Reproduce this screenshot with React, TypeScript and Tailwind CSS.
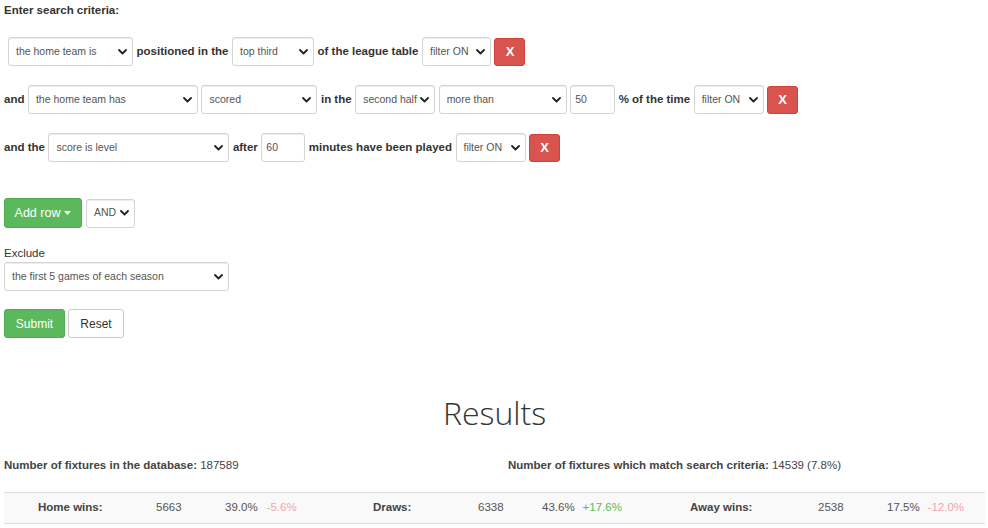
import React from "react";

const Chevron = () => (
  <svg width="9" height="6" viewBox="0 0 9 6" className="shrink-0">
    <path d="M1 1 L4.5 4.5 L8 1" fill="none" stroke="#222" strokeWidth="1.8" strokeLinecap="round" strokeLinejoin="round" />
  </svg>
);

function Sel({ w, text, h = "h-[29px]" }: { w: string; text: string; h?: string }) {
  return (
    <div
      className={`${w} ${h} shrink-0 flex items-center justify-between pl-[7px] pr-[5px] bg-white border border-[#d4d4d4] rounded-[3px] shadow-[inset_0_1px_1px_rgba(0,0,0,0.075)] text-[10.5px] text-[#555]`}
    >
      <span className="whitespace-nowrap">{text}</span>
      <Chevron />
    </div>
  );
}

function Inp({ w, text }: { w: string; text: string }) {
  return (
    <div
      className={`${w} h-[29px] shrink-0 flex items-center pl-[4px] bg-white border border-[#d4d4d4] rounded-[3px] shadow-[inset_0_1px_1px_rgba(0,0,0,0.075)] text-[10.5px] text-[#555]`}
    >
      {text}
    </div>
  );
}

const XBtn = () => (
  <div className="w-[31px] h-[28px] shrink-0 flex items-center justify-center bg-[#d9534f] border border-[#d43f3a] rounded-[3px] text-white font-bold text-[13px]">
    X
  </div>
);

const L = ({ children }: { children: React.ReactNode }) => (
  <span className="font-bold text-[11.5px] text-[#333] whitespace-nowrap">{children}</span>
);

export default function App() {
  return (
    <div className="w-[988px] h-[528px] overflow-hidden bg-white pl-[4px] pr-[3px] text-[#333]" style={{ fontFamily: '"Liberation Sans", Arial, sans-serif' }}>
      <div className="h-[20px] leading-[20px] font-bold text-[11.5px]">Enter search criteria:</div>

      <div className="mt-[17px] h-[29px] flex items-center gap-[3.5px] pl-[4px]">
        <Sel w="w-[125px]" text="the home team is" />
        <L>positioned in the</L>
        <Sel w="w-[82px]" text="top third" />
        <L>of the league table</L>
        <Sel w="w-[69px]" text="filter ON" />
        <XBtn />
      </div>

      <div className="mt-[19px] h-[29px] flex items-center gap-[3.5px]">
        <L>and</L>
        <Sel w="w-[170px]" text="the home team has" />
        <Sel w="w-[116px]" text="scored" />
        <L>in the</L>
        <Sel w="w-[80px]" text="second half" />
        <Sel w="w-[128px]" text="more than" />
        <Inp w="w-[45px]" text="50" />
        <L>% of the time</L>
        <Sel w="w-[70px]" text="filter ON" />
        <XBtn />
      </div>

      <div className="mt-[19px] h-[29px] flex items-center gap-[3.5px]">
        <L>and the</L>
        <Sel w="w-[181px]" text="score is level" />
        <L>after</L>
        <Inp w="w-[44px]" text="60" />
        <L>minutes have been played</L>
        <Sel w="w-[70px]" text="filter ON" />
        <XBtn />
      </div>

      <div className="mt-[36px] h-[30px] flex items-center gap-[4px]">
        <div className="w-[78px] h-[30px] flex items-center justify-center gap-[4px] bg-[#5cb85c] border border-[#4cae4c] rounded-[3px] text-white text-[12.5px]">
          <span>Add row</span>
          <svg width="7" height="4" viewBox="0 0 7 4"><path d="M0 0 L7 0 L3.5 4 Z" fill="#fff" /></svg>
        </div>
        <Sel w="w-[49px]" text="AND" />
      </div>

      <div className="mt-[17px] h-[16px] leading-[16px] text-[11.5px] text-[#333]">Exclude</div>
      <div className="mt-[1px]">
        <Sel w="w-[225px]" text="the first 5 games of each season" />
      </div>

      <div className="mt-[18px] h-[29px] flex items-center gap-[3px]">
        <div className="w-[61px] h-[29px] flex items-center justify-center bg-[#5cb85c] border border-[#4cae4c] rounded-[3px] text-white text-[12px]">
          Submit
        </div>
        <div className="w-[56px] h-[29px] flex items-center justify-center bg-white border border-[#ccc] rounded-[3px] text-[#333] text-[12px]">
          Reset
        </div>
      </div>

      <div className="mt-[55px] h-[40px] leading-[40px] text-center text-[32px] font-light text-[#333]" style={{ fontFamily: '"Open Sans", sans-serif' }}>
        Results
      </div>

      <div className="mt-[24px] h-[16px] leading-[16px] flex text-[11.5px] text-[#444]">
        <div className="w-[504px]">
          <span className="font-bold">Number of fixtures in the database:</span> 187589
        </div>
        <div>
          <span className="font-bold">Number of fixtures which match search criteria:</span> 14539 (7.8%)
        </div>
      </div>

      <div className="mt-[19px] h-[32px] flex items-center bg-[#f9f9f9] border-t border-b border-[#ddd] text-[11.5px] text-[#555]">
        <div className="w-[152px] pl-[34px] font-bold text-[#444]">Home wins:</div>
        <div className="w-[69px]">5663</div>
        <div className="w-[148px] flex gap-[9px]">
          <span>39.0%</span>
          <span className="text-[#eea5ac]">-5.6%</span>
        </div>
        <div className="w-[105px] font-bold text-[#444]">Draws:</div>
        <div className="w-[64px]">6338</div>
        <div className="w-[148px] flex gap-[8px]">
          <span>43.6%</span>
          <span className="text-[#5cb85c]">+17.6%</span>
        </div>
        <div className="w-[128px] font-bold text-[#444]">Away wins:</div>
        <div className="w-[69px]">2538</div>
        <div className="flex gap-[8px]">
          <span>17.5%</span>
          <span className="text-[#eea5ac]">-12.0%</span>
        </div>
      </div>
    </div>
  );
}
